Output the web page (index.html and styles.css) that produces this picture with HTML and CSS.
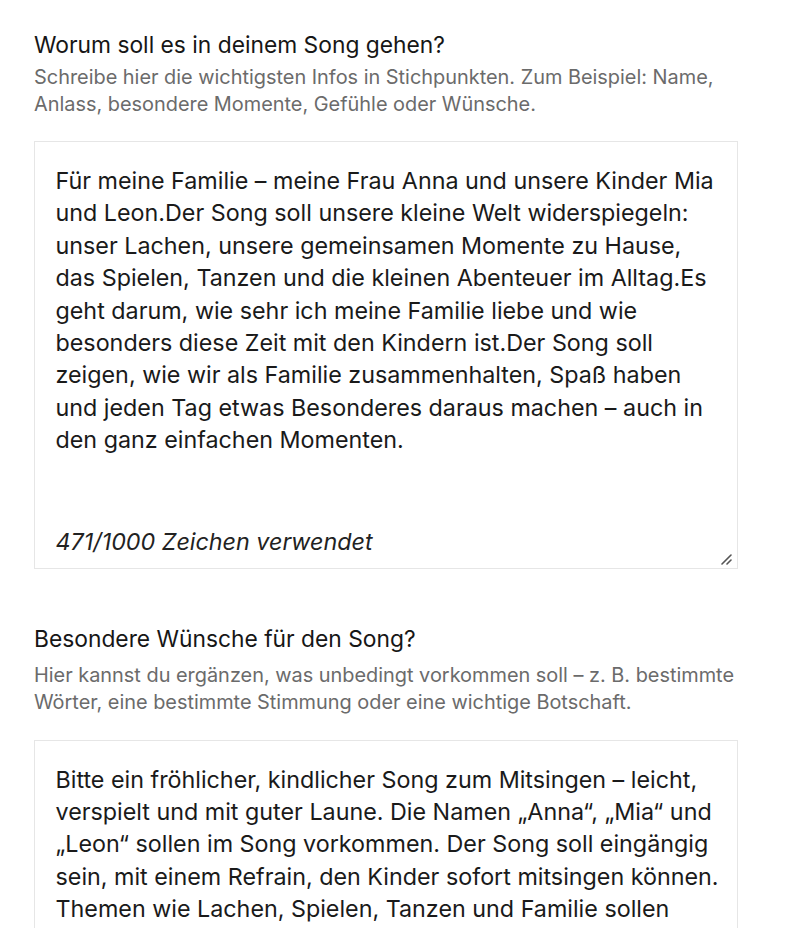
FILE: index.html
```html
<!DOCTYPE html>
<html lang="de">
<head>
  <meta charset="UTF-8" />
  <meta name="viewport" content="width=device-width, initial-scale=1.0"/>
  <title>Song Wünsche</title>
  <link rel="stylesheet" href="styles.css">
</head>
<body>

  <div class="form">
    <div class="field">
      <h2 class="field-title">Worum soll es in deinem Song gehen?</h2>
      <p class="field-hint">Schreibe hier die wichtigsten Infos in Stichpunkten. Zum Beispiel: Name, Anlass, besondere Momente, Gefühle oder Wünsche.</p>
      <div class="text-box">
        <div class="text-content tall">Für meine Familie – meine Frau Anna und unsere Kinder Mia und Leon.Der Song soll unsere kleine Welt widerspiegeln: unser Lachen, unsere gemeinsamen Momente zu Hause, das Spielen, Tanzen und die kleinen Abenteuer im Alltag.Es geht darum, wie sehr ich meine Familie liebe und wie besonders diese Zeit mit den Kindern ist.Der Song soll zeigen, wie wir als Familie zusammenhalten, Spaß haben und jeden Tag etwas Besonderes daraus machen – auch in den ganz einfachen Momenten.</div>
        <div class="counter">471/1000 Zeichen verwendet</div>
        <svg class="resize-handle" width="12" height="12" viewBox="0 0 12 12">
          <line x1="1" y1="11" x2="10" y2="2" stroke="#555" stroke-width="1.6" stroke-linecap="round"/>
          <line x1="6" y1="11" x2="10" y2="7" stroke="#555" stroke-width="1.6" stroke-linecap="round"/>
        </svg>
      </div>
    </div>

    <div class="field">
      <h2 class="field-title spaced">Besondere Wünsche für den Song?</h2>
      <p class="field-hint">Hier kannst du ergänzen, was unbedingt vorkommen soll – z. B. bestimmte Wörter, eine bestimmte Stimmung oder eine wichtige Botschaft.</p>
      <div class="text-box">
        <div class="text-content">Bitte ein fröhlicher, kindlicher Song zum Mitsingen – leicht, verspielt und mit guter Laune. Die Namen „Anna“, „Mia“ und „Leon“ sollen im Song vorkommen. Der Song soll eingängig sein, mit einem Refrain, den Kinder sofort mitsingen können. Themen wie Lachen, Spielen, Tanzen und Familie sollen dabei im Mittelpunkt stehen.</div>
      </div>
    </div>
  </div>

</body>
</html>
```

FILE: styles.css
```css
body {
  font-family: 'Inter', 'Noto Sans', sans-serif;
  background: white;
  color: #1a1a1a;
  margin: 0;
  padding: 0;
}

.form {
  width: 704px;
  padding: 30px 0 0 34px;
  display: flex;
  flex-direction: column;
  gap: 55px;
}

.field-title {
  font-size: 22.8px;
  font-weight: 400;
  line-height: 30px;
  margin: 0 0 3.5px 0;
  color: #161616;
}

.field-title.spaced {
  margin-bottom: 8.5px;
}

.field-hint {
  font-size: 19.9px;
  line-height: 27px;
  color: #6b6b6b;
  margin: 0 0 23.5px 0;
  width: 740px;
}

.text-box {
  position: relative;
  border: 1.5px solid #e6e6e6;
  padding: 23px 16.5px 9.5px 20.5px;
}

.text-content {
  font-size: 23.3px;
  line-height: 32.4px;
  color: #1a1a1a;
}

.text-content.tall {
  min-height: 361px;
}

.counter {
  font-size: 23.3px;
  font-style: italic;
  line-height: 32px;
  color: #222;
}

.resize-handle {
  position: absolute;
  right: 4px;
  bottom: 3px;
}
```
